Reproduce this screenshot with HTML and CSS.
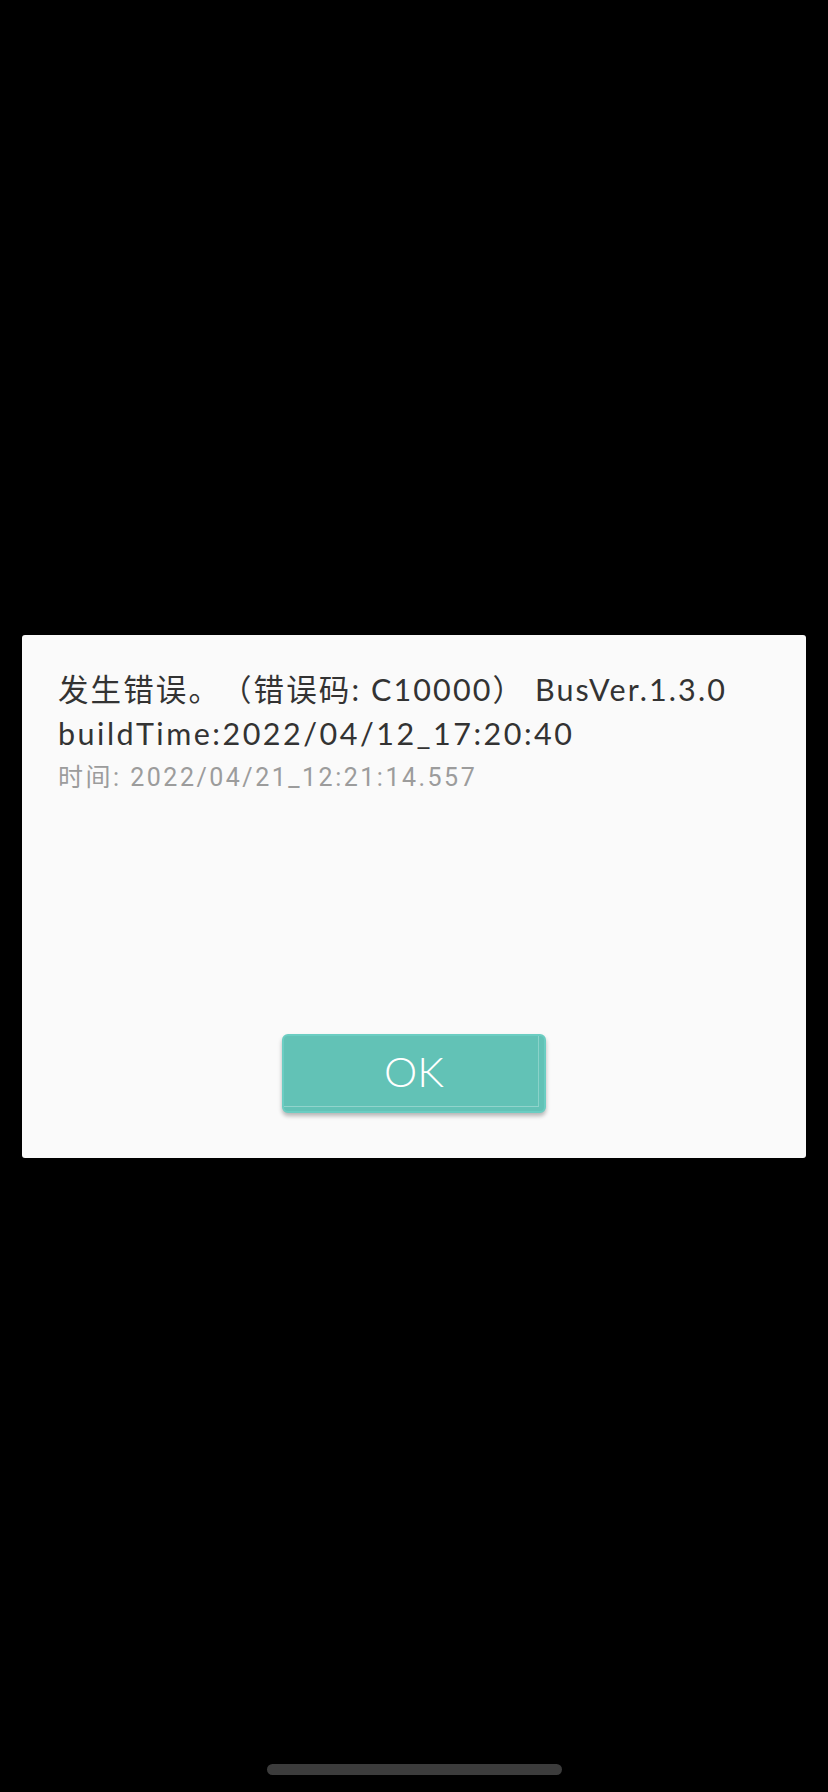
FILE: index.html
```html
<!DOCTYPE html>
<html lang="zh-CN">
<head>
<meta charset="utf-8">
<title>错误</title>
<link rel="stylesheet" href="styles.css">
</head>
<body>
<main class="screen">
  <section class="dialog">
    <div class="message">
      <p class="error">发生错误。（错误码: C10000） BusVer.1.3.0<br><span class="build">buildTime:2022/04/12_17:20:40</span></p>
      <p class="time">时间: 2022/04/21_12:21:14.557</p>
    </div>
    <div class="actions">
      <button class="ok" type="button">OK</button>
    </div>
  </section>
</main>
<div class="home-indicator"></div>
</body>
</html>
```

FILE: styles.css
```css
html, body {
  margin: 0;
  padding: 0;
  background: #000;
}
body {
  width: 828px;
  height: 1792px;
  position: relative;
  overflow: hidden;
  font-family: "Lato", "Noto Sans CJK SC", sans-serif;
}
.screen {
  height: 1792px;
  display: flex;
  align-items: center;
  justify-content: center;
}
.dialog {
  width: 784px;
  height: 523px;
  box-sizing: border-box;
  background: #fafafa;
  border-radius: 3px;
  display: flex;
  flex-direction: column;
  padding: 32px 36px 45px 36px;
}
.message p {
  margin: 0;
  text-spacing-trim: space-all;
  white-space: nowrap;
}
.error {
  font-size: 30.5px;
  line-height: 44px;
  letter-spacing: 2.1px;
  color: #333;
  font-family: "Lato", "Noto Sans CJK SC", sans-serif;
}
.build {
  letter-spacing: 2.5px;
}
.time {
  font-size: 25px;
  line-height: 46px;
  letter-spacing: 2.5px;
  color: #9c9c9c;
  font-family: "Roboto", "Noto Sans CJK SC", sans-serif;
}
.actions {
  margin-top: auto;
  display: flex;
  justify-content: center;
}
.ok {
  position: relative;
  width: 264px;
  height: 79px;
  border: 2px solid #6bcdc2;
  border-radius: 6px;
  background: #62c2b6;
  color: #fff;
  font-family: "Lato", sans-serif;
  font-weight: 300;
  font-size: 42px;
  line-height: 1;
  box-shadow: 0 3px 4px rgba(0,0,0,0.28);
  padding: 0 0 4px 0;
}
.ok::after {
  content: "";
  position: absolute;
  left: 0;
  top: 0;
  right: 5px;
  bottom: 4px;
  border-right: 1px solid rgba(255,255,255,0.25);
  border-bottom: 1px solid rgba(255,255,255,0.3);
}
.home-indicator {
  position: absolute;
  left: 267px;
  top: 1764px;
  width: 295px;
  height: 11px;
  border-radius: 6px;
  background: #3c3c3c;
}
```
